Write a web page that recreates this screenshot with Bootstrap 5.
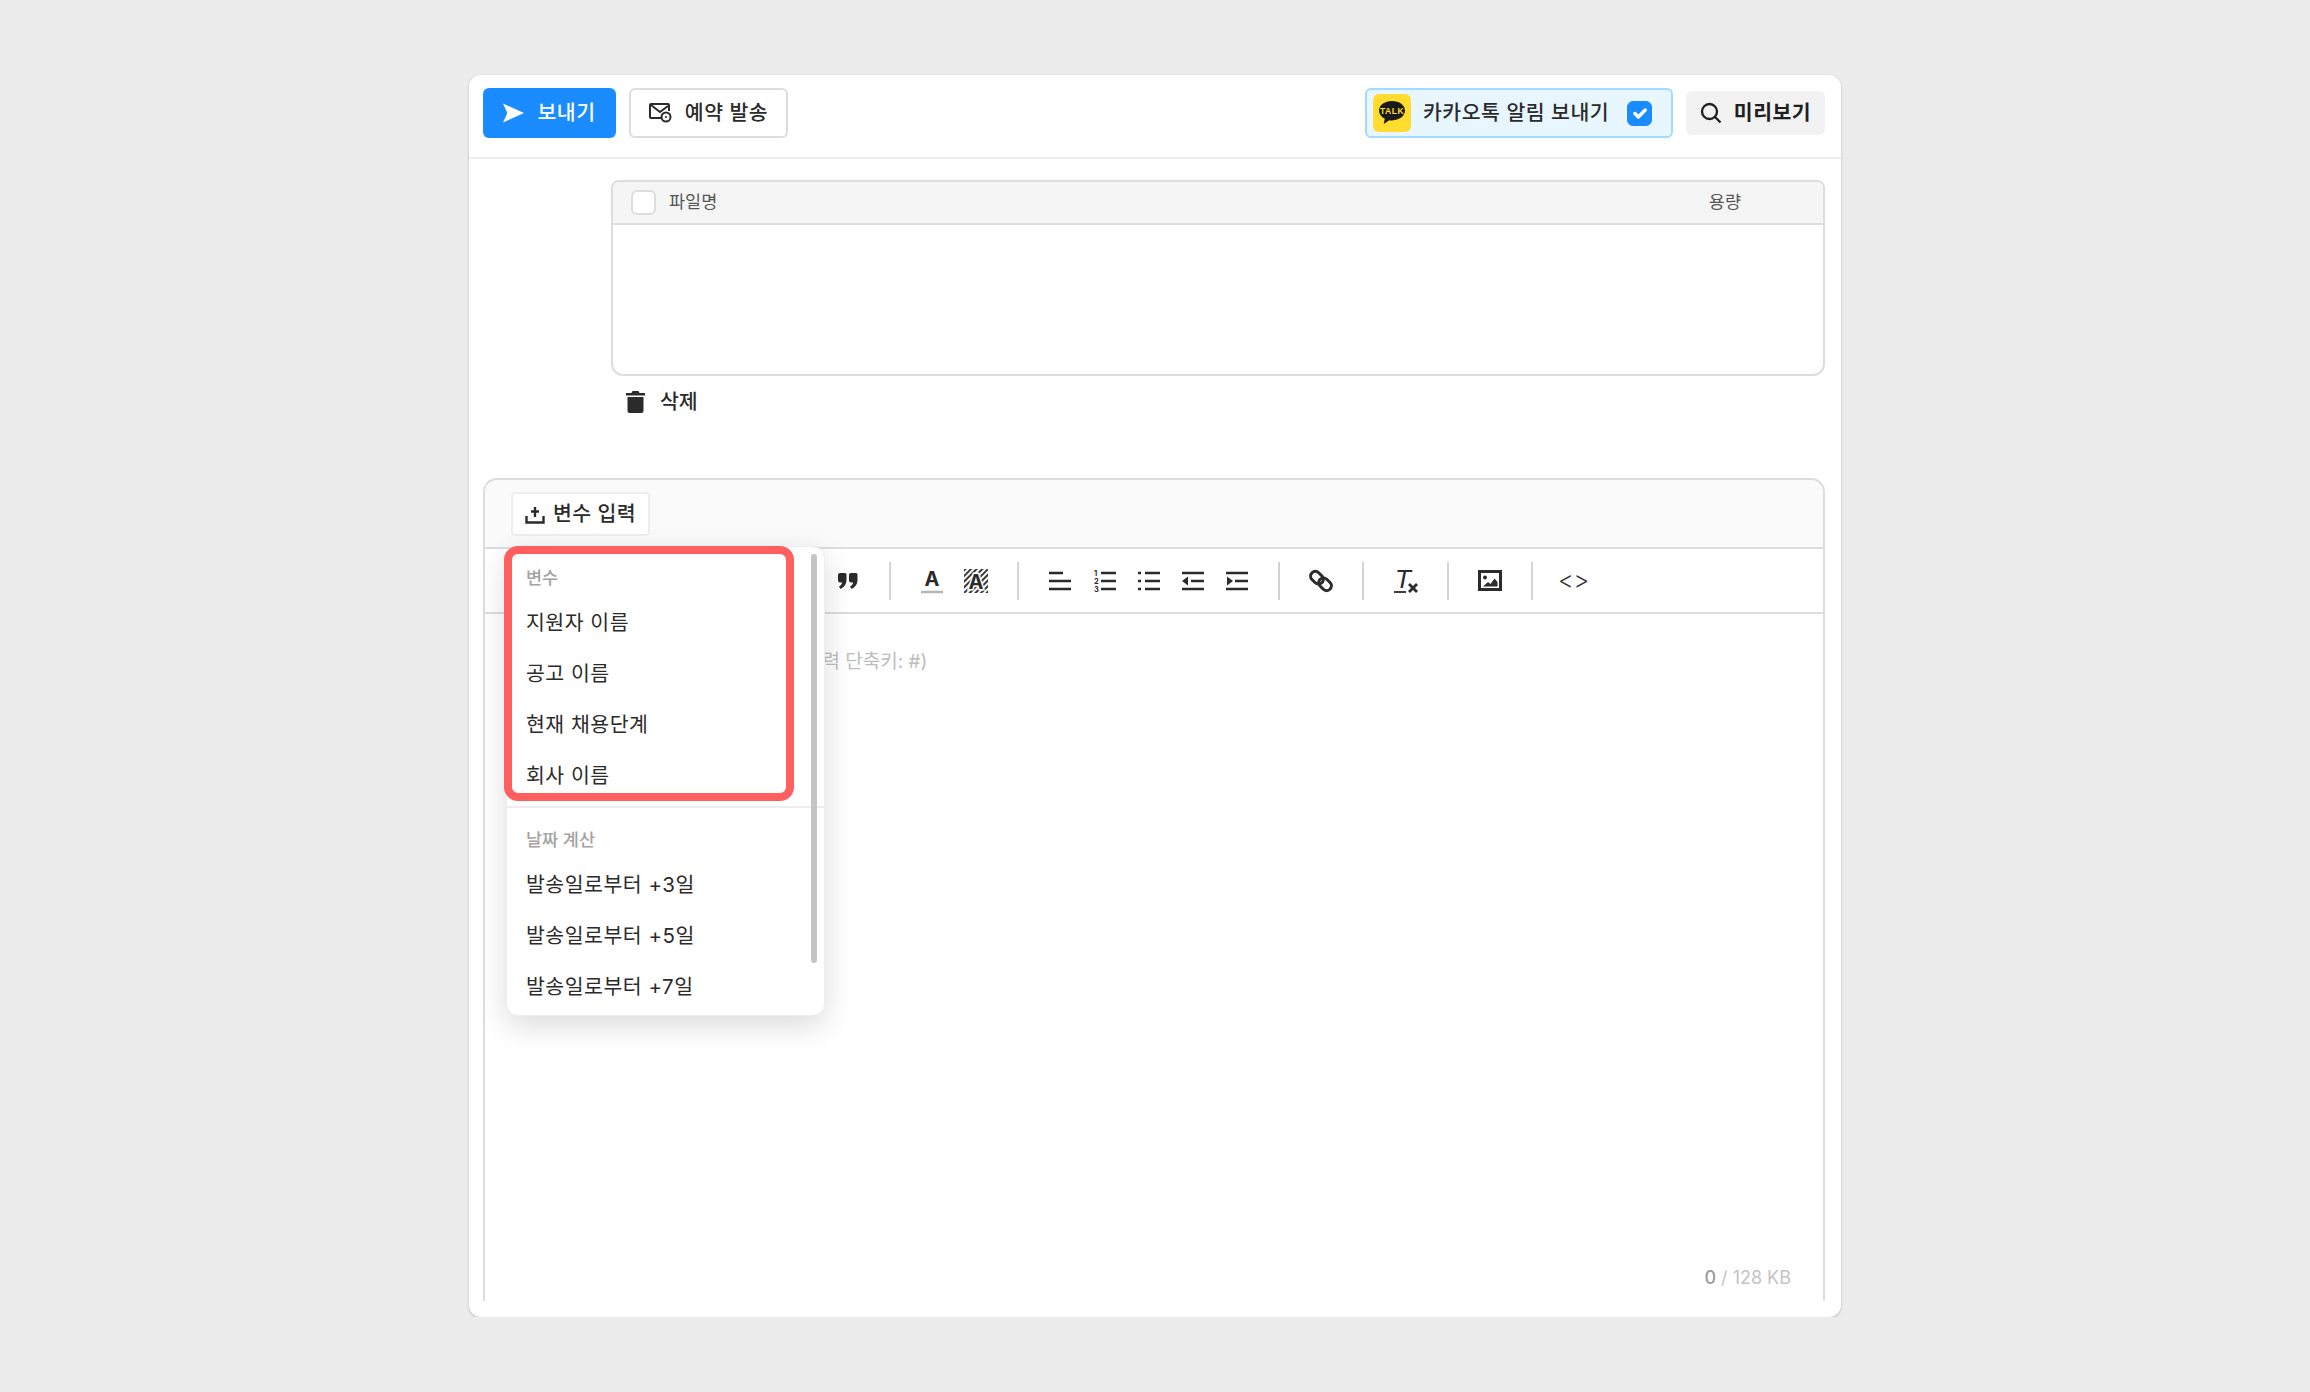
<!DOCTYPE html>
<html lang="ko">

<head>
  <meta charset="UTF-8" />
  <meta name="viewport" content="width=device-width, initial-scale=1.0" />
  <title>메일 작성</title>
  <link href="https://cdn.jsdelivr.net/npm/bootstrap@5.3.3/dist/css/bootstrap.min.css" rel="stylesheet">
  <style>
    body {
      background: #ececec;
      padding-top: 75px;
      font-family: Inter, "Noto Sans CJK KR", sans-serif;
      color: #2b2b2b;
    }

    .mail-sheet {
      width: 1372px;
      height: 1242px;
      background: #fff;
      border-radius: 12px;
      box-shadow: 0 1px 3px rgba(0, 0, 0, .22);
    }

    .top-bar {
      height: 84px;
      padding: 0 16px 6px 14px;
      border-bottom: 2px solid #eee;
    }

    .act-btn {
      height: 50px;
      padding: 0;
      gap: 13px;
      font-size: 20.5px;
      font-weight: 500;
      border-radius: 6px;
      letter-spacing: .5px;
    }

    .btn-send {
      width: 133px;
      background: #1a8cff;
      border: 0;
      color: #fff;
    }

    .btn-reserve {
      width: 159px;
      margin-left: 13px;
      background: #fff;
      border: 2px solid #ddd;
      color: #2b2b2b;
    }

    .kakao-box {
      width: 308px;
      height: 50px;
      padding: 0 19px 0 6px;
      background: #e8f6ff;
      border: 2px solid #a2dbff;
      border-radius: 6px;
      font-size: 20.5px;
      font-weight: 500;
      letter-spacing: .5px;
    }

    .kakao-logo {
      width: 38px;
      height: 38px;
      margin-right: 12px;
      background: #ffdc2e;
      border-radius: 6px;
    }

    .form-check-input.tick {
      width: 25px;
      height: 25px;
      margin: 0;
      border-radius: 6px;
      float: none;
    }

    .form-check-input.tick-on {
      background-color: #1a8cff;
      border-color: #1a8cff;
    }

    .form-check-input.tick-off {
      border: 2px solid #ddd;
    }

    .btn-preview {
      width: 139px;
      height: 44px;
      gap: 12px;
      padding: 0;
      margin-left: 13px;
      background: #f2f2f2;
      border: 0;
      border-radius: 6px;
      font-size: 20.5px;
      font-weight: 600;
      letter-spacing: .5px;
      color: #1f1f1f;
    }

    .sheet-body {
      padding: 21px 16px 16px 14px;
    }

    .file-table {
      margin-left: 128px;
      height: 196px;
      border: 2px solid #ddd;
      border-radius: 8px 8px 12px 12px;
      overflow: hidden;
    }

    .file-head {
      height: 43px;
      padding: 0 82px 0 18px;
      gap: 13px;
      background: #f5f5f5;
      border-bottom: 2px solid #ddd;
      font-size: 17.5px;
      color: #555;
    }

    .del-row {
      margin: 12px 0 0 143px;
      height: 28px;
      gap: 15px;
      font-size: 20.5px;
      font-weight: 500;
    }

    .editor-box {
      margin-top: 62px;
      border: 2px solid #ddd;
      border-bottom: 0;
      border-radius: 14px 14px 0 0;
    }

    .editor-head {
      height: 69px;
      padding-left: 26px;
      background: #fafafa;
      border-radius: 14px 14px 0 0;
      border-bottom: 2px solid #ddd;
    }

    .btn-var {
      width: 139px;
      height: 44px;
      gap: 8px;
      padding: 2px 0 0;
      background: #fff;
      border: 2px solid #eee;
      border-radius: 4px;
      font-size: 20.5px;
      font-weight: 500;
      letter-spacing: .4px;
      color: #2b2b2b;
    }

    .tool-row {
      height: 65px;
      padding: 1px 0 0 341px;
      border-bottom: 2px solid #ddd;
    }

    .tool-btn {
      width: 44.25px;
      height: 38px;
      flex-shrink: 0;
    }

    .tool-sep {
      width: 2px;
      height: 38px;
      margin: 0 18.9px;
      flex-shrink: 0;
      background: #d4d4d4;
    }

    .tool-code {
      font-size: 24px;
      font-weight: 300;
      color: #333;
    }

    .editor-area {
      padding: 34px 32px 10px 59px;
    }

    .hint-text {
      font-size: 19px;
      line-height: 28px;
      color: #bdbdbd;
    }

    .byte-count {
      font-size: 18px;
      color: #c4c4c4;
    }

    .byte-count b {
      font-weight: 500;
      color: #9b9b9b;
    }

    .var-menu.dropdown-menu {
      left: 21px;
      top: 66px;
      width: 319px;
      height: 470px;
      padding: 10.5px 0 0;
      border: 1px solid #eee;
      border-radius: 12px;
      box-shadow: 0 10px 30px rgba(0, 0, 0, .14);
      z-index: 5;
    }

    .var-menu .dropdown-header {
      height: 39px;
      padding: 0 19px;
      line-height: 39px;
      font-size: 17.5px;
      color: #a3a3a3;
    }

    .var-menu .dropdown-item {
      height: 51px;
      padding: 0 19px;
      line-height: 51px;
      font-size: 20.5px;
      color: #2b2b2b;
      letter-spacing: .5px;
    }

    .var-menu .dropdown-divider {
      margin: 5.5px 0 12px;
      border-top: 2px solid #eee;
      opacity: 1;
    }

    .menu-thumb {
      position: absolute;
      left: 304px;
      top: 7px;
      width: 6px;
      height: 409px;
      border-radius: 3px;
      background: #c4c4c4;
    }

    .mark-box {
      position: absolute;
      left: -3px;
      top: -1px;
      width: 290px;
      height: 255px;
      border: 8px solid #ff5f5f;
      border-radius: 14px;
      pointer-events: none;
    }
  </style>
</head>

<body>

  <div class="mail-sheet mx-auto d-flex flex-column">

    <!-- top actions -->
    <div class="top-bar d-flex align-items-center flex-shrink-0">
      <button class="btn act-btn btn-send d-flex align-items-center justify-content-center">
        <svg width="21" height="20" viewBox="0 0 22 20"><path d="M0 0 22 10 0 20 4.500 10Z" fill="#fff"/></svg>
        보내기
      </button>
      <button class="btn act-btn btn-reserve d-flex align-items-center justify-content-center">
        <svg width="23" height="20" viewBox="0 0 23 20" fill="none" stroke="#2b2b2b" stroke-width="2"><path d="M13 15H2a1 1 0 0 1-1-1V2a1 1 0 0 1 1-1h17a1 1 0 0 1 1 1v6"/><path d="m2 2 9 7 8-6"/><circle cx="17" cy="14" r="4.500" fill="#fff"/><circle cx="17" cy="14" r="1" fill="#2b2b2b" stroke="none"/></svg>
        예약 발송
      </button>
      <div class="kakao-box d-flex align-items-center ms-auto">
        <span class="kakao-logo d-flex align-items-center justify-content-center flex-shrink-0">
          <svg width="28" height="26" viewBox="0 0 28 26"><path d="M14 1C6.500 1 1 5.300 1 10.600c0 3.500 2.300 6.500 5.800 8.200L5.700 24l5.600-3.800c.9.100 1.800.2 2.700.2 7.500 0 13-4.400 13-9.800S21.500 1 14 1Z" fill="#1a1a1a"/><text x="14" y="13.500" text-anchor="middle" font-family="'Liberation Sans',sans-serif" font-size="8.500" font-weight="700" fill="#ffdc2e">TALK</text></svg>
        </span>
        <span class="flex-grow-1">카카오톡 알림 보내기</span>
        <input class="form-check-input tick tick-on" type="checkbox" checked>
      </div>
      <button class="btn btn-preview d-flex align-items-center justify-content-center">
        <svg width="22" height="22" viewBox="0 0 22 22" fill="none" stroke="#1f1f1f" stroke-width="2.300"><circle cx="9.500" cy="9.500" r="7.500"/><path d="m15 15 5.500 5.500"/></svg>
        미리보기
      </button>
    </div>

    <div class="sheet-body d-flex flex-column flex-grow-1">

      <!-- attachments -->
      <div class="file-table flex-shrink-0">
        <div class="file-head d-flex align-items-center">
          <input class="form-check-input tick tick-off" type="checkbox">
          <span class="flex-grow-1">파일명</span>
          <span>용량</span>
        </div>
      </div>
      <div class="del-row d-flex align-items-center flex-shrink-0">
        <svg width="19" height="22" viewBox="0 0 19 22" fill="#2b2b2b"><path d="M6.500 0h6l1 2H19v2.500H0V2h5.500Z"/><path d="M1.500 6h16v14a2 2 0 0 1-2 2h-12a2 2 0 0 1-2-2Z"/></svg>
        삭제
      </div>

      <!-- editor -->
      <div class="editor-box position-relative d-flex flex-column flex-grow-1">
        <div class="editor-head d-flex align-items-center flex-shrink-0">
          <button class="btn btn-var d-flex align-items-center justify-content-center">
            <svg width="20" height="18" viewBox="0 0 20 18" fill="none" stroke="#2b2b2b" stroke-width="2.400"><path d="M1.500 10v6.500h17V10"/><path d="M10 1v10M6 5.500h8"/></svg>
            변수 입력
          </button>
        </div>

        <div class="tool-row d-flex align-items-center flex-shrink-0">
          <span class="tool-btn d-flex align-items-center justify-content-center">
            <svg width="22" height="18" viewBox="0 0 22 18" fill="#2b2b2b"><path d="M3 1h5a1.500 1.500 0 0 1 1.500 1.500V8c0 4-2.500 7.500-6 9l-1.500-2.500c1.800-1 3-2.500 3.200-4H3a2 2 0 0 1-2-2V3a2 2 0 0 1 2-2Z"/><path d="M14 1h5a1.500 1.500 0 0 1 1.500 1.500V8c0 4-2.500 7.500-6 9L13 14.500c1.800-1 3-2.500 3.200-4H14a2 2 0 0 1-2-2V3a2 2 0 0 1 2-2Z"/></svg>
          </span>
          <span class="tool-sep"></span>
          <span class="tool-btn d-flex align-items-center justify-content-center">
            <svg width="24" height="28" viewBox="0 0 24 28"><text x="12" y="19" text-anchor="middle" font-family="Inter,sans-serif" font-size="20" font-weight="700" fill="#2b2b2b">A</text><path d="M1 25h22" stroke="#b5b5b5" stroke-width="2.500"/></svg>
          </span>
          <span class="tool-btn d-flex align-items-center justify-content-center">
            <svg width="24" height="24" viewBox="0 0 24 24">
              <defs><pattern id="hatch" width="4" height="4" patternUnits="userSpaceOnUse" patternTransform="rotate(45)"><rect width="2" height="4" fill="#3a3a3a"/></pattern></defs>
              <rect width="24" height="24" fill="url(#hatch)"/>
              <text x="12" y="20" text-anchor="middle" font-family="Inter,sans-serif" font-size="20" font-weight="700" fill="#2b2b2b" stroke="#fff" stroke-width="3" paint-order="stroke">A</text>
            </svg>
          </span>
          <span class="tool-sep"></span>
          <span class="tool-btn d-flex align-items-center justify-content-center">
            <svg width="24" height="24" viewBox="0 0 24 24" stroke="#2b2b2b" stroke-width="2.600"><path d="M1 4h14M1 12h22M1 20h22"/></svg>
          </span>
          <span class="tool-btn d-flex align-items-center justify-content-center">
            <svg width="24" height="24" viewBox="0 0 24 24"><path d="M8 4h15M8 12h15M8 20h15" stroke="#2b2b2b" stroke-width="2.600"/><g font-family="Inter,sans-serif" font-size="7.500" font-weight="700" fill="#2b2b2b"><text x="1" y="7">1</text><text x="1" y="15">2</text><text x="1" y="23">3</text></g></svg>
          </span>
          <span class="tool-btn d-flex align-items-center justify-content-center">
            <svg width="24" height="24" viewBox="0 0 24 24" stroke="#2b2b2b" stroke-width="2.600"><path d="M8 4h15M8 12h15M8 20h15M1 4h3M1 12h3M1 20h3"/></svg>
          </span>
          <span class="tool-btn d-flex align-items-center justify-content-center">
            <svg width="24" height="24" viewBox="0 0 24 24"><path d="M1 4h22M10 12h13M1 20h22" stroke="#2b2b2b" stroke-width="2.600"/><path d="M7 7.500v9L1 12Z" fill="#2b2b2b"/></svg>
          </span>
          <span class="tool-btn d-flex align-items-center justify-content-center">
            <svg width="24" height="24" viewBox="0 0 24 24"><path d="M1 4h22M10 12h13M1 20h22" stroke="#2b2b2b" stroke-width="2.600"/><path d="M2 7.500v9L8 12Z" fill="#2b2b2b"/></svg>
          </span>
          <span class="tool-sep"></span>
          <span class="tool-btn d-flex align-items-center justify-content-center">
            <svg width="24" height="24" viewBox="0 0 24 24" fill="none" stroke="#2b2b2b" stroke-width="3"><rect x="1" y="4" width="14" height="9.500" rx="4.700" transform="rotate(45 8 8.700)"/><rect x="9" y="10.500" width="14" height="9.500" rx="4.700" transform="rotate(45 16 15.300)"/></svg>
          </span>
          <span class="tool-sep"></span>
          <span class="tool-btn d-flex align-items-center justify-content-center">
            <svg width="26" height="34" viewBox="0 -4 26 34"><text x="2" y="20" font-family="'Liberation Sans',sans-serif" font-style="italic" font-size="26" fill="#2b2b2b">T</text><path d="M1 24h12" stroke="#2b2b2b" stroke-width="1.800"/><path d="m16 16 8 8M24 16l-8 8" stroke="#2b2b2b" stroke-width="2.800"/></svg>
          </span>
          <span class="tool-sep"></span>
          <span class="tool-btn d-flex align-items-center justify-content-center">
            <svg width="24" height="22" viewBox="0 0 24 22"><rect x="1.500" y="1.500" width="21" height="18" fill="none" stroke="#2b2b2b" stroke-width="3"/><circle cx="7" cy="7.500" r="2" fill="#2b2b2b"/><path d="M5 16.500 10 12l2.500 2 4-5.500 3 3.500v4.500Z" fill="#2b2b2b"/></svg>
          </span>
          <span class="tool-sep"></span>
          <span class="tool-btn tool-code d-flex align-items-center justify-content-center"><span class="text-nowrap">&lt;&gt;</span></span>
        </div>

        <div class="editor-area d-flex flex-column justify-content-between flex-grow-1">
          <div class="hint-text">메일 내용을 입력해주세요. (변수 입력 단축키: #)</div>
          <div class="byte-count text-end"><b>0</b> / 128 KB</div>
        </div>

        <!-- variable picker, opened over the editor -->
        <div class="dropdown-menu show var-menu">
          <h6 class="dropdown-header mb-0">변수</h6>
          <a class="dropdown-item" href="#">지원자 이름</a>
          <a class="dropdown-item" href="#">공고 이름</a>
          <a class="dropdown-item" href="#">현재 채용단계</a>
          <a class="dropdown-item" href="#">회사 이름</a>
          <hr class="dropdown-divider">
          <h6 class="dropdown-header mb-0">날짜 계산</h6>
          <a class="dropdown-item" href="#">발송일로부터 +3일</a>
          <a class="dropdown-item" href="#">발송일로부터 +5일</a>
          <a class="dropdown-item" href="#">발송일로부터 +7일</a>
          <span class="menu-thumb"></span>
          <span class="mark-box"></span>
        </div>
      </div>

    </div>
  </div>

  <script src="https://cdn.jsdelivr.net/npm/bootstrap@5.3.3/dist/js/bootstrap.bundle.min.js"></script>
</body>

</html>
